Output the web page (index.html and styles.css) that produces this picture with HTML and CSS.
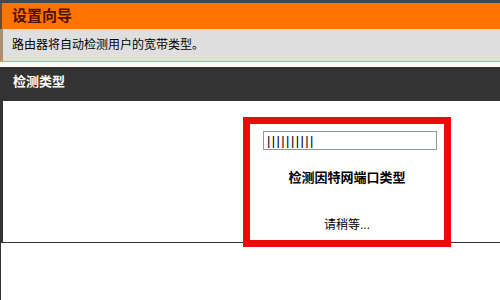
FILE: index.html
```html
<!DOCTYPE html>
<html lang="zh-CN">
<head>
    <meta charset="UTF-8">
    <meta name="viewport" content="width=device-width, initial-scale=1.0">
    <title>设置向导</title>
    <link rel="stylesheet" href="styles.css">
</head>
<body>

    <div class="top-strip"></div>
    <div class="wizard-head">设置向导</div>
    <div class="wizard-intro">路由器将自动检测用户的宽带类型。</div>
    <div class="spacer"></div>

    <div class="section-title">检测类型</div>
    <div class="section-body">
        <div class="detect-box">
            <div class="progress">||||||||||</div>
            <div class="detect-label">检测因特网端口类型</div>
            <div class="detect-wait">请稍等...</div>
        </div>
    </div>
    <div class="page-rest"></div>

</body>
</html>
```

FILE: styles.css
```css
body {
    margin: 0;
    padding: 0;
    font-family: "Liberation Sans", "Noto Sans CJK SC", sans-serif;
    background-color: #ffffff;
    color: #000;
}

.top-strip {
    height: 3px;
    background-color: #474747;
}

.wizard-head {
    height: 26px;
    box-sizing: border-box;
    padding: 3px 0 0 10px;
    border-left: 2px solid #6a4a30;
    background-color: #ff7300;
    color: #4a1200;
    font-size: 15px;
    font-weight: bold;
    line-height: 20px;
}

.wizard-intro {
    height: 32px;
    box-sizing: border-box;
    padding-left: 9px;
    border-left: 3px solid #a89070;
    background-color: #dfdfdf;
    font-size: 12px;
    line-height: 32px;
}

.spacer {
    height: 5px;
    border-top: 1px solid #e0a070;
    background-color: #fffaf4;
}

.section-title {
    height: 34px;
    box-sizing: border-box;
    padding: 6px 0 0 13px;
    background-color: #333333;
    color: #ffffff;
    font-size: 13px;
    font-weight: bold;
    line-height: 18px;
}

.section-body {
    height: 142px;
    box-sizing: border-box;
    padding: 16px 0 0 240px;
    border-left: 3px solid #333333;
    border-bottom: 1px solid #333333;
}

.detect-box {
    width: 208px;
    height: 130px;
    box-sizing: border-box;
    padding: 7px 0 0 13px;
    border: 7px solid #ec0a0a;
    background-color: #ffffff;
    position: relative;
}

.progress {
    width: 174px;
    height: 19px;
    box-sizing: border-box;
    padding-left: 3px;
    border: 1px solid #8a9aa0;
    font-size: 13px;
    line-height: 17px;
    letter-spacing: 1.4px;
    overflow: hidden;
}

.detect-label {
    margin: 20px 13px 0 0;
    text-align: center;
    font-size: 13px;
    font-weight: bold;
    line-height: 16px;
}

.detect-wait {
    margin: 31px 13px 0 0;
    text-align: center;
    font-size: 12px;
    line-height: 16px;
}

.page-rest {
    height: 60px;
    border-left: 1px solid #333333;
}
```
